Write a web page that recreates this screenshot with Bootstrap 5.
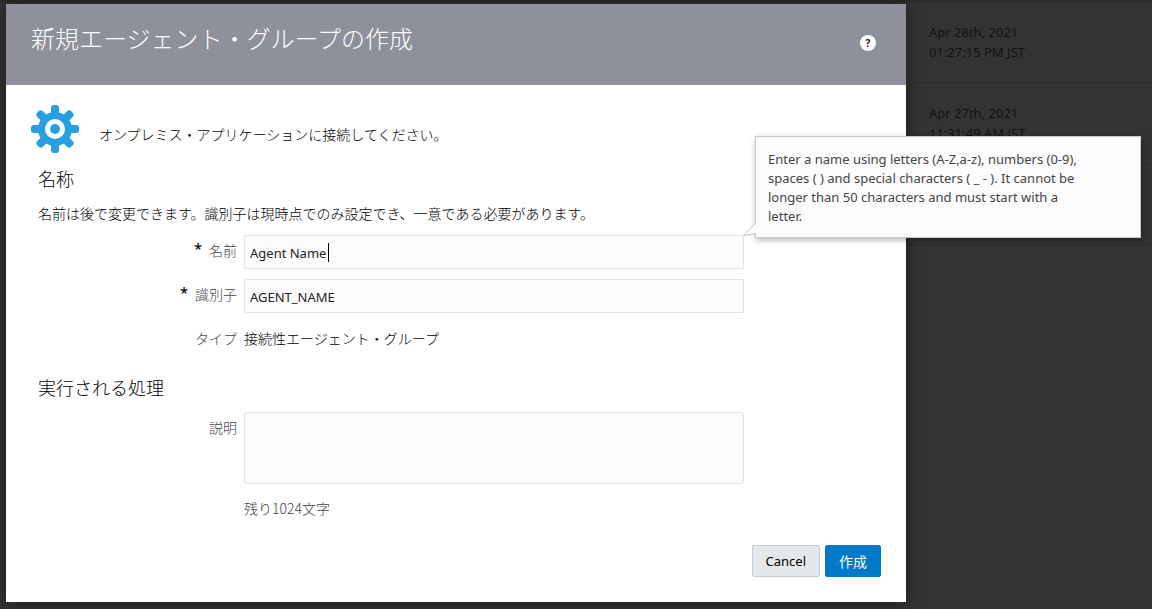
<!DOCTYPE html>
<html lang="ja">
<head>
<meta charset="utf-8">
<meta name="viewport" content="width=device-width, initial-scale=1">
<title>新規エージェント・グループの作成</title>
<link href="https://cdn.jsdelivr.net/npm/bootstrap@5.3.0/dist/css/bootstrap.min.css" rel="stylesheet">
<style>
  body {
    background: #333;
    color: #000;
    font: 14px/20px "Noto Sans CJK JP", sans-serif;
    font-weight: 300;
  }
  .latin { font-family: "Noto Sans", "Noto Sans CJK JP", sans-serif; font-size: 13px; font-weight: 400; }

  /* dimmed list behind the dialog */
  .dim-list { --bs-table-bg: transparent; --bs-table-color: #111; border-color: #2b2b2b; border-top: 2px solid #2b2b2b; color: #111; table-layout: fixed; }
  .dim-list td { height: 81px; padding: 20px 0; color: #111; line-height: 20px; }
  .dim-list .spacer-col { width: 929px; }

  .dialog-layer { position: absolute; inset: 0 0 auto 0; padding: 4px 6px 6px; }
  .dialog-box { max-width: 900px; background: #fff; box-shadow: 0 0 12px 2px rgba(0,0,0,.35); }
  .dialog-head { background: #8e909b; padding: 17px 30px 30px 25px; }
  .dialog-head h1 { font-size: 24px; line-height: 34px; font-weight: 300; color: #fff; }
  .help-btn { width: 16px; height: 16px; background: #fff; color: #111; font: 700 10px/16px "Open Sans", sans-serif; margin-top: 10px; }
  .dialog-main { padding: 20px 25px 25px; }
  .intro { margin: 10px 0 0 20px; }
  .section { padding: 12px 0 0 7px; }
  .section + .section { padding-top: 18px; }
  .section h2 { font-size: 18px; line-height: 26px; font-weight: 300; margin: 0 0 12px; }
  .gear { color: #279fe0; }

  .field-grid { display: grid; grid-template-columns: 206px minmax(0, 500px); row-gap: 10px; }
  .field-label { color: #444; text-align: right; padding: 0 7px 2px 0; line-height: 30px; }
  .field-text { line-height: 30px; color: #000; }
  .field-label, .field-text { min-height: 33px; }
  .counter { color: #444; line-height: 20px; margin-top: 14px; }
  .req { color: #000; font: 500 14px/20px "Noto Sans", sans-serif; margin-right: 4px; vertical-align: 2px; }
  .form-control, .form-control:focus {
    background: #fcfcfc; border: 1px solid #e2e4e4; border-radius: 2px; color: #222;
    font-size: 13px; padding: 3px 5px 1px; height: 34px; box-shadow: none; caret-color: transparent;
  }
  textarea.form-control, textarea.form-control:focus { height: 72px; resize: none; }
  .caret-bar { position: absolute; left: 84px; top: 8px; width: 1px; height: 19px; background: #000; }

  .hint { position: absolute; left: calc(100% + 11px); bottom: calc(100% - 3px); width: 386px; z-index: 2;
    background: #fcfcfc; border: 1px solid #c8c8c8; box-shadow: 1px 2px 6px rgba(0,0,0,.3);
    padding: 13px 50px 11px 12px; color: #444; line-height: 19px; }
  .hint svg { position: absolute; left: -13px; bottom: 0; }

  .act { height: 32px; padding: 0 13px; border-radius: 2px; font-size: 14px; line-height: 30px; }
  .act-cancel, .act-cancel:hover { background: #e4e8ea; border-color: #c4ced7; color: #000; font-size: 13px; }
  .act-create, .act-create:hover { background: #0079c9; border-color: #0079c9; color: #fff; font-weight: 400; line-height: 26px; }
  .actions { margin-top: 27px; gap: 5px; }
</style>
</head>
<body>
<div class="overflow-hidden">
  <table class="table dim-list latin mb-0">
    <colgroup><col class="spacer-col"><col></colgroup>
    <tbody>
      <tr><td></td><td>Apr 28th, 2021<br>01:27:15 PM JST</td></tr>
      <tr><td></td><td>Apr 27th, 2021<br>11:31:49 AM JST</td></tr>
      <tr><td></td><td></td></tr>
    </tbody>
  </table>
</div>

<div class="dialog-layer">
  <form class="dialog-box" role="dialog" aria-labelledby="dlgTitle" onsubmit="return false">
    <header class="dialog-head d-flex justify-content-between align-items-center">
      <h1 class="m-0" id="dlgTitle">新規エージェント・グループの作成</h1>
      <button type="button" class="help-btn border-0 rounded-circle p-0">?</button>
    </header>

    <div class="dialog-main">
      <div class="d-flex align-items-center">
        <svg class="gear flex-shrink-0" width="48" height="48" viewBox="-24 -24 48 48" aria-hidden="true">
          <g fill="currentColor">
            <circle r="17"/>
            <rect x="-4" y="-24" width="8" height="48" rx="3"/>
            <rect x="-24" y="-4" width="48" height="8" rx="3"/>
            <g transform="rotate(45)">
              <rect x="-4" y="-24" width="8" height="48" rx="3"/>
              <rect x="-24" y="-4" width="48" height="8" rx="3"/>
            </g>
          </g>
          <circle r="10" fill="#fff"/>
          <circle r="5" fill="currentColor"/>
        </svg>
        <p class="intro">オンプレミス・アプリケーションに接続してください。</p>
      </div>

      <section class="section">
        <h2>名称</h2>
        <p class="mb-2 pb-1">名前は後で変更できます。識別子は現時点でのみ設定でき、一意である必要があります。</p>
        <div class="field-grid">
          <label class="field-label" for="agentName"><span class="req">*</span> 名前</label>
          <div class="position-relative">
            <input class="form-control latin" id="agentName" type="text" value="Agent Name" aria-describedby="nameHint">
            <span class="caret-bar"></span>
            <div class="hint latin" id="nameHint" role="tooltip">
              <svg width="14" height="14" viewBox="0 0 14 14" aria-hidden="true">
                <path d="M14 .5 H12.500 L.5 12.500 L12.500 10.500 H14z" fill="#fcfcfc"/>
                <path d="M12.500 .5 L.5 12.500 L12.500 10.500" fill="none" stroke="#c8c8c8"/>
              </svg>
              Enter a name using letters (A-Z,a-z), numbers (0-9), spaces ( ) and special characters ( _ - ). It cannot be longer than 50 characters and must start with a letter.
            </div>
          </div>
          <label class="field-label" for="agentId"><span class="req">*</span> 識別子</label>
          <div><input class="form-control latin" id="agentId" type="text" value="AGENT_NAME"></div>
          <div class="field-label">タイプ</div>
          <div class="field-text">接続性エージェント・グループ</div>
        </div>
      </section>

      <section class="section">
        <h2>実行される処理</h2>
        <div class="field-grid">
          <label class="field-label" for="agentDesc">説明</label>
          <div>
            <textarea class="form-control d-block" id="agentDesc"></textarea>
            <div class="counter">残り1024文字</div>
          </div>
        </div>
      </section>

      <div class="actions d-flex justify-content-end">
        <button type="button" class="btn act act-cancel latin">Cancel</button>
        <button type="submit" class="btn act act-create">作成</button>
      </div>
    </div>
  </form>
</div>
<script src="https://cdn.jsdelivr.net/npm/bootstrap@5.3.0/dist/js/bootstrap.bundle.min.js"></script>
</body>
</html>
